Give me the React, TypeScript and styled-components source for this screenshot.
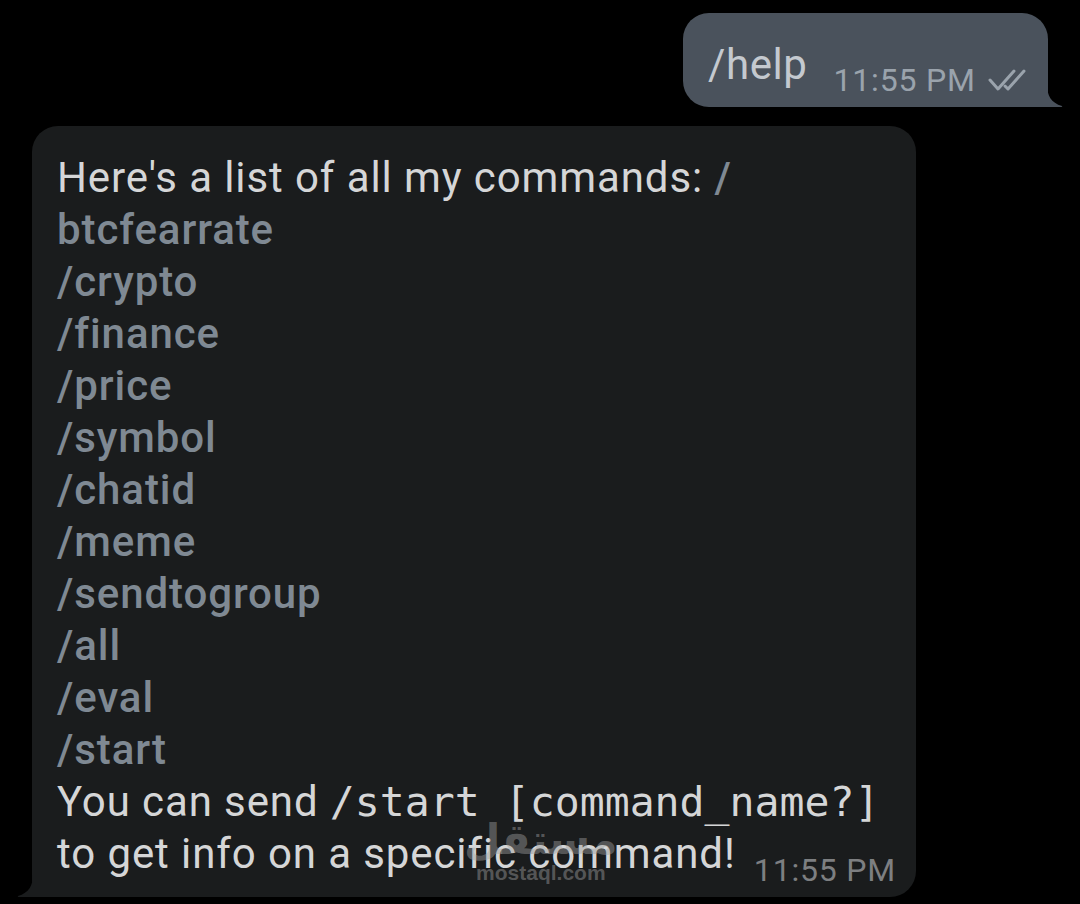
import styled, { createGlobalStyle } from "styled-components";

const GlobalStyle = createGlobalStyle`
  html, body {
    margin: 0;
    padding: 0;
    background: #000;
  }
  body {
    font-family: Roboto, "Noto Sans", sans-serif;
  }
`;

const Screen = styled.div`
  width: 1080px;
  height: 904px;
  background: #000;
  display: flex;
  flex-direction: column;
  overflow: hidden;
`;

const Row = styled.div<{ $out?: boolean }>`
  display: flex;
  justify-content: ${(p) => (p.$out ? "flex-end" : "flex-start")};
  padding: ${(p) => (p.$out ? "13px 32px 0 0" : "19px 0 0 32px")};
`;

const Bubble = styled.div<{ $out?: boolean }>`
  position: relative;
  background: ${(p) => (p.$out ? "#4a525c" : "#1a1c1d")};
  border-radius: ${(p) => (p.$out ? "26px 26px 0 26px" : "26px 26px 26px 0")};
  color: #d5d6d7;
  font-size: 42px;
  letter-spacing: 0.9px;
  line-height: 52px;
`;

const Tail = styled.svg<{ $out?: boolean }>`
  position: absolute;
  bottom: 0;
  width: 16px;
  height: 22px;
  ${(p) => (p.$out ? "right: -15px;" : "left: -15px;")}
`;

const OutBody = styled.div`
  display: flex;
  align-items: flex-start;
  height: 94px;
  box-sizing: border-box;
  padding: 35px 18px 0 25px;
  width: 365px;
  white-space: nowrap;
`;

const OutText = styled.span`
  color: #c4c9cf;
  font-size: 42px;
  line-height: 42px;
  margin-top: -4px;
  letter-spacing: 0.6px;
`;

const Meta = styled.span<{ $out?: boolean }>`
  display: inline-flex;
  align-items: center;
  flex-shrink: 0;
  white-space: nowrap;
  gap: 12px;
  margin-left: ${(p) => (p.$out ? "26px" : "auto")};
  margin-top: ${(p) => (p.$out ? "14px" : "0")};
  font-size: 32px;
  line-height: 36px;
  letter-spacing: 0.8px;
  color: ${(p) => (p.$out ? "#9aa3ac" : "#7d7f81")};
  transform: translateY(${(p) => (p.$out ? "0" : "13px")});
`;

const InBody = styled.div`
  width: 884px;
  box-sizing: border-box;
  padding: 26px 20px 17px 25px;
`;

const Cmd = styled.span`
  color: #7f8993;
  font-weight: 500;
`;

const Mono = styled.span`
  font-family: "DejaVu Sans Mono", "Liberation Mono", monospace;
  font-size: 41.5px;
  letter-spacing: 0;
  color: #d5d6d7;
`;

const LastLine = styled.div`
  display: flex;
  align-items: baseline;
`;

const Watermark = styled.div`
  position: absolute;
  left: 432px;
  top: 692px;
  display: flex;
  flex-direction: column;
  align-items: center;
  color: rgba(160, 160, 160, 0.45);
  letter-spacing: 0;
  pointer-events: none;
`;

const WmLogo = styled.span`
  font-family: "DejaVu Sans", sans-serif;
  font-size: 42px;
  line-height: 44px;
  font-weight: bold;
`;

const WmText = styled.span`
  font-family: "Liberation Sans", sans-serif;
  font-weight: bold;
  font-size: 21px;
  line-height: 22px;
`;

const commands = [
  "/crypto",
  "/finance",
  "/price",
  "/symbol",
  "/chatid",
  "/meme",
  "/sendtogroup",
  "/all",
  "/eval",
  "/start",
];

function Ticks() {
  return (
    <svg width="46" height="24" viewBox="0 0 46 24" fill="none" stroke="#9aa3ac" strokeWidth="3" strokeLinecap="round" strokeLinejoin="round">
      <path d="M2 12 L10 21 L26 3" />
      <path d="M17 18 L20 21 L36 3" />
    </svg>
  );
}

export default function App() {
  return (
    <Screen>
      <GlobalStyle />
      <Row $out>
        <Bubble $out>
          <OutBody>
            <OutText>/help</OutText>
            <Meta $out>
              11:55 PM
              <Ticks />
            </Meta>
          </OutBody>
          <Tail $out viewBox="0 0 16 22">
            <path d="M0 0 C0 10 4 18 15 21 Q16 22 14 22 L0 22 Z" fill="#4a525c" />
          </Tail>
        </Bubble>
      </Row>
      <Row>
        <Bubble>
          <InBody>
            <div>
              Here's a list of all my commands: <Cmd>/<br />btcfearrate</Cmd>
            </div>
            {commands.map((c) => (
              <div key={c}>
                <Cmd>{c}</Cmd>
              </div>
            ))}
            <div>
              You can send <Mono>/start [command_name?]</Mono>
            </div>
            <LastLine>
              to get info on a specific command!
              <Meta>11:55 PM</Meta>
            </LastLine>
          </InBody>
          <Tail viewBox="0 0 16 22">
            <path d="M16 0 C16 10 12 18 1 21 Q0 22 2 22 L16 22 Z" fill="#1a1c1d" />
          </Tail>
          <Watermark>
            <WmLogo>مستقل</WmLogo>
            <WmText>mostaql.com</WmText>
          </Watermark>
        </Bubble>
      </Row>
    </Screen>
  );
}
